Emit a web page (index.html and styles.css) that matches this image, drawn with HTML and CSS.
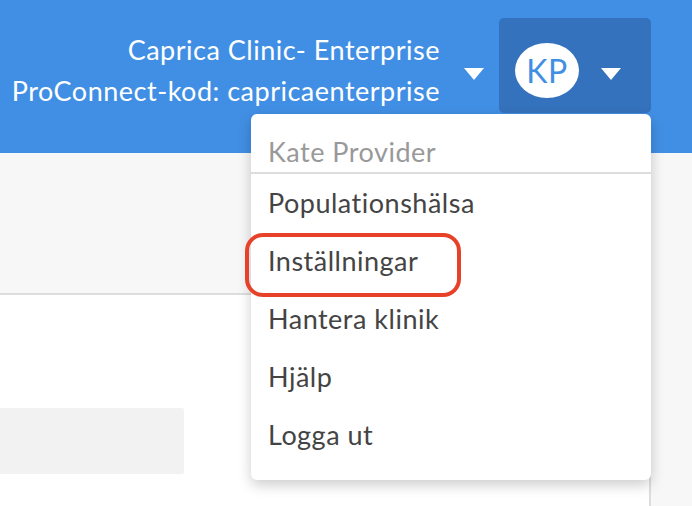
FILE: index.html
```html
<!DOCTYPE html>
<html lang="sv">
<head>
<meta charset="utf-8">
<title>ProConnect</title>
<link rel="stylesheet" href="styles.css">
</head>
<body>
<header class="topbar">
  <div class="clinic">
    <div class="clinic-text">
      <div class="clinic-name">Caprica Clinic- Enterprise</div>
      <div class="clinic-code">ProConnect-kod: capricaenterprise</div>
    </div>
    <span class="caret"></span>
  </div>
  <div class="user">
    <div class="user-btn">
      <span class="avatar">KP</span>
      <span class="caret"></span>
    </div>
    <ul class="menu">
      <li class="menu-head">Kate Provider</li>
      <li class="menu-item">Populationshälsa</li>
      <li class="menu-item highlighted">Inställningar<span class="ring"></span></li>
      <li class="menu-item">Hantera klinik</li>
      <li class="menu-item">Hjälp</li>
      <li class="menu-item">Logga ut</li>
    </ul>
  </div>
</header>
<div class="page">
  <main class="main">
    <div class="band"></div>
    <div class="body">
      <div class="placeholder"></div>
    </div>
  </main>
  <aside class="side"></aside>
</div>
</body>
</html>
```
FILE: styles.css
```css
* { box-sizing: border-box; }
html, body { margin: 0; padding: 0; }
body {
  font-family: Lato, "Open Sans", sans-serif;
  background: #fff;
  width: 692px;
  height: 506px;
  overflow: hidden;
}
.topbar {
  height: 153px;
  background: #418fe4;
  display: flex;
  justify-content: flex-end;
  align-items: flex-start;
  padding: 18px 41px 0 0;
  position: relative;
  z-index: 2;
}
.clinic {
  display: flex;
  align-items: center;
  margin-right: 15px;
  height: 95px;
}
.clinic-text {
  color: #fff;
  text-align: right;
  font-size: 27px;
  letter-spacing: 0.5px;
  line-height: 41px;
  margin-top: 8px;
  margin-right: 24px;
  white-space: nowrap;
}
.caret {
  width: 0;
  height: 0;
  border-left: 10px solid transparent;
  border-right: 10px solid transparent;
  border-top: 12px solid #fff;
  margin-top: 17px;
}
.user { position: relative; }
.user-btn {
  width: 152px;
  height: 95px;
  background: #3572bd;
  border-radius: 5px;
  display: flex;
  align-items: center;
  padding-left: 16px;
  gap: 22px;
}
.avatar {
  width: 64px;
  height: 55px;
  margin-top: 9px;
  border-radius: 50%;
  background: #fff;
  color: #418fe4;
  font-size: 32px;
  letter-spacing: 0.5px;
  display: flex;
  align-items: center;
  justify-content: center;
}
.menu {
  position: absolute;
  right: 0;
  top: 96px;
  width: 400px;
  margin: 0;
  padding: 0 0 16px;
  list-style: none;
  background: #fff;
  border-radius: 6px;
  box-shadow: 0 5px 14px rgba(0, 0, 0, 0.2);
}
.menu-head {
  padding: 19px 17px 1px;
  line-height: 38px;
  font-size: 27px;
  letter-spacing: 0.5px;
  color: #999;
  border-bottom: 2px solid #ddd;
}
.menu-item {
  position: relative;
  padding: 0 17px;
  line-height: 58px;
  font-size: 27px;
  letter-spacing: 0.5px;
  color: #444;
}
.ring {
  position: absolute;
  left: -6px;
  top: 1px;
  width: 216px;
  height: 64px;
  border: 4px solid #e8412a;
  border-radius: 18px;
}
.page {
  display: flex;
  height: 353px;
}
.main { flex: 1; }
.band {
  height: 142px;
  background: #f7f7f7;
  border-bottom: 2px solid #ddd;
}
.body { padding-top: 113px; }
.placeholder {
  width: 184px;
  height: 66px;
  background: #f2f2f2;
  border-radius: 0 2px 2px 0;
}
.side {
  width: 43px;
  background: #f7f7f7;
  border-left: 2px solid #ddd;
}
```
